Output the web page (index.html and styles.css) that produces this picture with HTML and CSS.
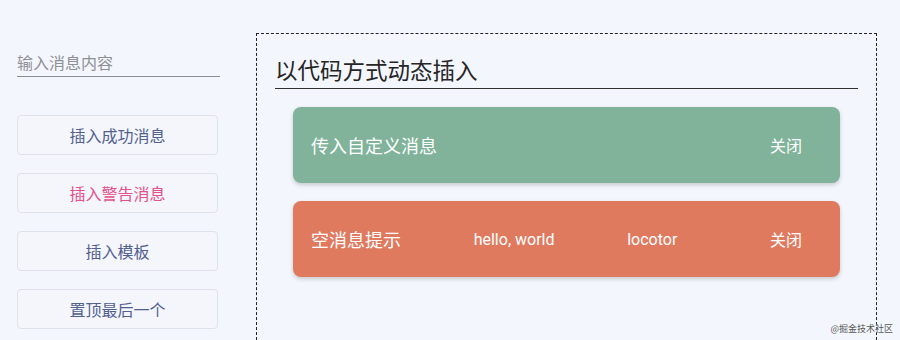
FILE: index.html
```html
<!DOCTYPE html>
<html lang="zh">
<head>
<meta charset="utf-8">
<title>消息</title>
<link rel="stylesheet" href="styles.css">
</head>
<body>
<div class="page">
  <aside class="side">
    <div class="field"><input class="msg-input" type="text" placeholder="输入消息内容"></div>
    <button class="btn">插入成功消息</button>
    <button class="btn btn-warn">插入警告消息</button>
    <button class="btn">插入模板</button>
    <button class="btn">置顶最后一个</button>
  </aside>
  <main class="board">
    <h2 class="title">以代码方式动态插入</h2>
    <div class="list">
      <div class="card card-success">
        <span class="card-main">传入自定义消息</span>
        <span class="card-close">关闭</span>
      </div>
      <div class="card card-error">
        <span class="card-main">空消息提示</span>
        <span class="card-text">hello, world</span>
        <span class="card-text">locotor</span>
        <span class="card-close">关闭</span>
      </div>
    </div>
  </main>
</div>
<div class="mark">@掘金技术社区</div>
</body>
</html>
```

FILE: styles.css
```css
html, body {
  margin: 0;
  padding: 0;
  background: #f3f6fc;
  font-family: "Noto Sans CJK SC", "Noto Sans", sans-serif;
  overflow: hidden;
  height: 340px;
}
.page {
  display: flex;
  align-items: flex-start;
  padding: 33px 0 0 17px;
}
.side {
  width: 203px;
  display: flex;
  flex-direction: column;
  gap: 18px;
  margin-right: 36px;
}
.field {
  padding-top: 14px;
  margin-bottom: 20px;
}
.msg-input {
  display: block;
  width: 203px;
  box-sizing: border-box;
  height: 30px;
  border: none;
  border-bottom: 1px solid #8a8d94;
  background: transparent;
  padding: 0;
  font-family: inherit;
  font-size: 16px;
  color: #333;
  outline: none;
}
.msg-input::placeholder {
  color: #8f8f94;
}
.btn {
  width: 201px;
  height: 40px;
  box-sizing: border-box;
  border: 1px solid #dfe2ea;
  border-radius: 4px;
  background: #f4f6fc;
  color: #52608e;
  font-family: inherit;
  font-size: 16px;
  padding: 0;
}
.btn-warn {
  color: #e4508a;
}
.board {
  width: 621px;
  height: 307px;
  box-sizing: border-box;
  border: 1px dashed #222;
  border-bottom: none;
  padding: 0 18px;
}
.title {
  margin: 0;
  padding: 19px 0 3px;
  font-size: 22.5px;
  font-weight: normal;
  color: #262626;
  line-height: 32px;
  border-bottom: 1px solid #2e2e2e;
}
.list {
  margin: 18px 18px 0;
  display: flex;
  flex-direction: column;
  gap: 18px;
}
.card {
  height: 76px;
  border-radius: 8px;
  display: flex;
  align-items: center;
  justify-content: space-between;
  padding: 0 18px;
  color: #fff;
  box-shadow: 0 2px 4px rgba(0, 0, 0, 0.18);
}
.card-success {
  background: #80b39a;
}
.card-error {
  background: #e07a5f;
}
.card-main {
  font-size: 18px;
}
.card-text {
  font-family: Roboto, "Liberation Sans", sans-serif;
  font-size: 16px;
}
.card-close {
  font-size: 16px;
  padding: 0 20px;
}
.mark {
  position: absolute;
  right: 7px;
  bottom: 5px;
  font-size: 9px;
  color: #555;
  text-shadow: 0 0 1px #fff;
}
```
